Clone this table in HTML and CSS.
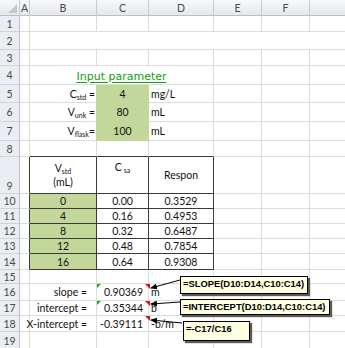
FILE: index.html
```html
<!DOCTYPE html>
<html>
<head>
<meta charset="utf-8">
<link rel="stylesheet" href="styles.css">
</head>
<body>
<div class="wrap">
<div class="sheet">
  <div class="ch corner"><span class="tri"></span></div><div class="ch">A</div><div class="ch">B</div><div class="ch">C</div><div class="ch">D</div><div class="ch">E</div><div class="ch">F</div><div class="ch"></div>

  <div class="rh">1</div><div></div><div></div><div></div><div></div><div></div><div></div><div></div>
  <div class="rh">2</div><div></div><div class="span6"></div>
  <div class="rh">3</div><div></div><div></div><div></div><div></div><div></div><div></div><div></div>
  <div class="rh">4</div><div></div><div class="title span3">Input parameter</div><div></div><div></div><div></div>
  <div class="rh">5</div><div></div><div class="r gb"><span>C<span class="sb">std</span>&nbsp;=</span></div><div class="cen g">4</div><div class="l">mg/L</div><div></div><div></div><div></div>
  <div class="rh">6</div><div></div><div class="r gb"><span>V<span class="sb">unk</span>&nbsp;=</span></div><div class="cen g">80</div><div class="l">mL</div><div></div><div></div><div></div>
  <div class="rh">7</div><div></div><div class="r gb"><span>V<span class="sb">flask</span>=</span></div><div class="cen g">100</div><div class="l">mL</div><div></div><div></div><div></div>
  <div class="rh">8</div><div></div><div class="tt"></div><div class="tt"></div><div class="tt"></div><div></div><div></div><div></div>
  <div class="rh bot">9</div><div class="tl"></div><div class="t stack"><span>V<span class="sb">std</span></span><span>(mL)</span></div><div class="t top"><span>C<span class="sb">&nbsp;sa</span></span></div><div class="t cen">Respon</div><div></div><div></div><div></div>
  <div class="rh">10</div><div class="tl"></div><div class="g t cen">0</div><div class="t cen">0.00</div><div class="t cen">0.3529</div><div></div><div></div><div></div>
  <div class="rh">11</div><div class="tl"></div><div class="g t cen">4</div><div class="t cen">0.16</div><div class="t cen">0.4953</div><div></div><div></div><div></div>
  <div class="rh">12</div><div class="tl"></div><div class="g t cen">8</div><div class="t cen">0.32</div><div class="t cen">0.6487</div><div></div><div></div><div></div>
  <div class="rh">13</div><div class="tl"></div><div class="g t cen">12</div><div class="t cen">0.48</div><div class="t cen">0.7854</div><div></div><div></div><div></div>
  <div class="rh">14</div><div class="tl"></div><div class="g t cen">16</div><div class="t cen">0.64</div><div class="t cen">0.9308</div><div></div><div></div><div></div>
  <div class="rh">15</div><div></div><div></div><div></div><div></div><div></div><div></div><div></div>
  <div class="rh">16</div><div></div><div class="r lab">slope =</div><div class="r val gi ri">0.90369</div><div class="l">m</div><div></div><div></div><div></div>
  <div class="rh">17</div><div></div><div class="r lab">intercept =</div><div class="r val gi ri">0.35344</div><div class="l">b</div><div></div><div></div><div></div>
  <div class="rh">18</div><div></div><div class="r lab">X-intercept =</div><div class="r val ri">-0.39111</div><div class="l">-b/m</div><div></div><div></div><div></div>
  <div class="rh">19</div><div></div><div></div><div></div><div></div><div></div><div></div><div></div>
</div>

<svg class="arrows" width="345" height="348" viewBox="0 0 345 348">
  <defs>
    <marker id="ah" markerWidth="7" markerHeight="6" refX="6" refY="3" orient="auto" markerUnits="userSpaceOnUse">
      <path d="M0,0 L7,3 L0,6 Z" fill="#000"/>
    </marker>
  </defs>
  <line x1="180" y1="280" x2="151" y2="288" stroke="#000" stroke-width="1" marker-end="url(#ah)"/>
  <line x1="180" y1="302" x2="151" y2="304" stroke="#000" stroke-width="1" marker-end="url(#ah)"/>
  <line x1="182" y1="323" x2="151" y2="320" stroke="#000" stroke-width="1" marker-end="url(#ah)"/>
</svg>

<div class="note n1">=SLOPE(D10:D14,C10:C14)</div>
<div class="note n2">=INTERCEPT(D10:D14,C10:C14)</div>
<div class="note n3">=-C17/C16</div>
</div>
</body>
</html>
```

FILE: styles.css
```css
html, body {
  margin: 0;
  padding: 0;
  overflow: hidden;
  background: #ffffff;
}

.wrap {
  position: relative;
  width: 345px;
  height: 348px;
  overflow: hidden;
}

.sheet {
  display: grid;
  grid-template-columns: 20px 10px 67px 52px 65px 48px 48px 40px;
  grid-template-rows: 16px 16px 18px 16px 19px 18px 19px 19px 16px 37px 15px 15px 15px 15px 16px 14px 17px 15px 16px 18px;
  width: 350px;
  font-family: Lato, "Liberation Sans", sans-serif;
  font-size: 10.5px;
  color: #111;
}

.sheet > div {
  box-sizing: border-box;
  border-right: 1px solid #dadcdd;
  border-bottom: 1px solid #dadcdd;
  display: flex;
  align-items: center;
  white-space: nowrap;
  min-width: 0;
  position: relative;
}

.sb {
  font-size: 7px;
  position: relative;
  top: 2px;
}

.ch {
  background: linear-gradient(#f7f8fa, #e5e8ec);
  border-right-color: #c7ccd3 !important;
  border-bottom-color: #b9c0c8 !important;
  color: #4a4a4a;
  justify-content: center;
}

.corner .tri {
  position: absolute;
  right: 2px;
  bottom: 2px;
  width: 0;
  height: 0;
  border-left: 9px solid transparent;
  border-bottom: 9px solid #c3c8cf;
}

.rh {
  background: #eaedf1;
  border-right-color: #b9c0c8 !important;
  border-bottom-color: #cfd4da !important;
  color: #4a4a4a;
  justify-content: center;
}

.rh.bot {
  align-items: flex-end;
  padding-bottom: 1px;
}

.span6 {
  grid-column: span 6;
  border-right: none !important;
}

.span3 {
  grid-column: span 3;
}

.title {
  justify-content: center;
  font-family: "DejaVu Sans", sans-serif;
  font-size: 11px;
  color: #12a012;
  text-decoration: underline;
  text-underline-offset: 2px;
  padding-top: 2px;
}

.r {
  justify-content: flex-end;
  padding-right: 1px;
}

.cen {
  justify-content: center;
}

.l {
  padding-left: 2px;
}

.g {
  background: #c4d79b;
  border-color: #c4d79b !important;
}

.gb {
  border-right-color: #c4d79b !important;
}

.t {
  border-right-color: #3a3a3a !important;
  border-bottom-color: #3a3a3a !important;
}

.tl {
  border-right-color: #3a3a3a !important;
}

.tt {
  border-bottom-color: #3a3a3a !important;
}

.stack {
  flex-direction: column;
  justify-content: center;
  line-height: 13px;
  padding-top: 1px;
}

.top {
  align-items: flex-start !important;
  justify-content: center;
  padding-top: 4px;
}

.lab {
  padding-right: 9px;
}

.val {
  padding-right: 5px;
}

.gi::before {
  content: "";
  position: absolute;
  left: 0;
  top: 0;
  width: 0;
  height: 0;
  border-top: 4px solid #2a9a2a;
  border-right: 4px solid transparent;
}

.ri::after {
  content: "";
  position: absolute;
  right: -2px;
  top: 0;
  width: 0;
  height: 0;
  border-top: 5px solid #e01010;
  border-left: 5px solid transparent;
}

.arrows {
  position: absolute;
  left: 0;
  top: 0;
  pointer-events: none;
}

.note {
  position: absolute;
  box-sizing: border-box;
  background: #ffffe1;
  border: 1px solid #000;
  box-shadow: 2px 2px 1px #5a5a5a;
  font-family: "Liberation Sans", Arial, sans-serif;
  font-weight: bold;
  font-size: 9.4px;
  line-height: 11px;
  color: #000;
  padding: 1px 2px;
  white-space: nowrap;
}

.n1 {
  left: 180px;
  top: 276px;
  width: 128px;
  height: 18px;
}

.n2 {
  left: 180px;
  top: 299px;
  width: 150px;
  height: 16px;
}

.n3 {
  left: 183px;
  top: 321px;
  width: 67px;
  height: 20px;
}
```
